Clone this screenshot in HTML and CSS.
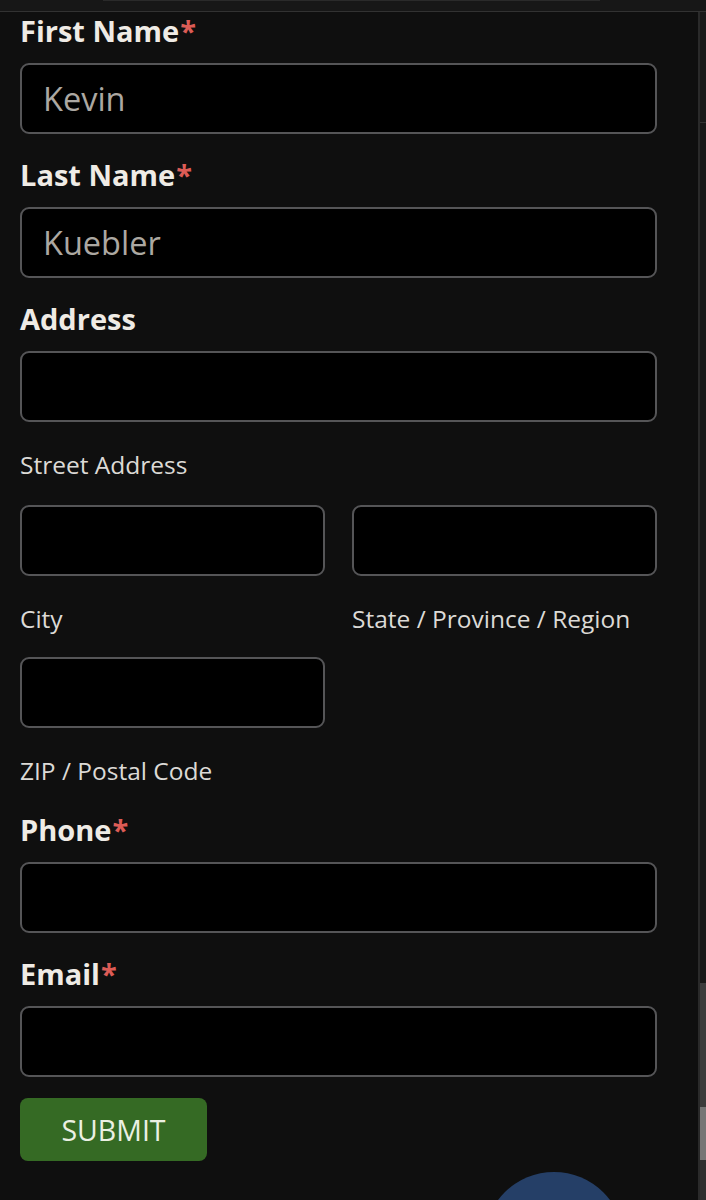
FILE: index.html
```html
<!DOCTYPE html>
<html lang="en">
<head>
<meta charset="utf-8">
<title>Contact form</title>
<link rel="stylesheet" href="styles.css">
</head>
<body>
<div class="topbar"><div class="topbar-tab"></div></div>
<div class="page">
  <form class="form">
    <div class="field">
      <label class="label">First Name<span class="req">*</span></label>
      <div class="input">Kevin</div>
    </div>
    <div class="field">
      <label class="label">Last Name<span class="req">*</span></label>
      <div class="input">Kuebler</div>
    </div>
    <div class="field">
      <label class="label">Address</label>
      <div class="input"></div>
      <div class="sublabel">Street Address</div>
      <div class="addr-grid">
        <div class="cell">
          <div class="input"></div>
          <div class="sublabel">City</div>
        </div>
        <div class="cell">
          <div class="input"></div>
          <div class="sublabel">State / Province / Region</div>
        </div>
        <div class="cell">
          <div class="input"></div>
          <div class="sublabel">ZIP / Postal Code</div>
        </div>
      </div>
    </div>
    <div class="field field-after-addr">
      <label class="label">Phone<span class="req">*</span></label>
      <div class="input"></div>
    </div>
    <div class="field">
      <label class="label">Email<span class="req">*</span></label>
      <div class="input"></div>
    </div>
    <button class="submit" type="button">SUBMIT</button>
  </form>
  <div class="rail">
    <div class="rail-seg seg-a"></div>
    <div class="rail-seg seg-b"></div>
    <div class="rail-seg seg-c"></div>
    <div class="rail-seg seg-d"></div>
    <div class="rail-seg seg-e"></div>
  </div>
</div>
<div class="fab-clip"><div class="fab"></div></div>
</body>
</html>
```
FILE: styles.css
```css
html, body {
  margin: 0;
  padding: 0;
  background: #0f0f0f;
  height: 1200px;
  overflow: hidden;
}
body {
  font-family: "Open Sans", "Noto Sans", sans-serif;
  position: relative;
}
.topbar {
  height: 11px;
  background: #171717;
  border-bottom: 1px solid #323232;
}
.topbar-tab {
  margin-left: 103px;
  width: 497px;
  height: 1px;
  background: #2a2a2a;
}
.page {
  display: flex;
  height: 1188px;
}
.form {
  width: 637px;
  padding-left: 20px;
  margin: 0;
}
.field {
  display: flex;
  flex-direction: column;
}
.field + .field {
  margin-top: 22px;
}
.field-after-addr.field {
  margin-top: 25px;
}
.label {
  font-weight: 700;
  font-size: 29px;
  line-height: 37px;
  color: #efebe5;
  margin-bottom: 14px;
}
.req {
  color: #dc5c56;
  margin-left: 1px;
}
.input {
  box-sizing: border-box;
  height: 71px;
  background: #000;
  border: 2px solid #555557;
  border-radius: 9px;
  padding: 0 21px;
  font-size: 32.5px;
  line-height: 67px;
  color: #aca8a2;
}
.sublabel {
  font-size: 24.5px;
  line-height: 30px;
  color: #dcdad6;
  margin-top: 28px;
}
.addr-grid {
  display: grid;
  grid-template-columns: 305px 305px;
  column-gap: 27px;
  row-gap: 23px;
  margin-top: 25px;
}
.submit {
  margin-top: 21px;
  width: 187px;
  height: 63px;
  background: #356a24;
  border: none;
  border-radius: 8px;
  color: #ebf0e3;
  font-family: "Open Sans", "Noto Sans", sans-serif;
  font-size: 28.5px;
  padding: 0;
}
.rail {
  margin-left: 41px;
  width: 6px;
  border-left: 2px solid #2a2a2a;
  background: #171717;
  display: flex;
  flex-direction: column;
}
.rail-seg { flex: none; }
.seg-a { height: 110px; background: #1a1a1a; border-bottom: 1px solid #333; }
.seg-b { height: 860px; background: #181818; }
.seg-c { height: 124px; background: #3c3c3c; }
.seg-d { height: 53px; background: #767676; }
.seg-e { flex: 1; background: #303030; }
.fab-clip {
  position: absolute;
  left: 484px;
  top: 1172px;
  width: 140px;
  height: 28px;
  overflow: hidden;
}
.fab {
  width: 140px;
  height: 140px;
  border-radius: 50%;
  background: #253f67;
}
```
